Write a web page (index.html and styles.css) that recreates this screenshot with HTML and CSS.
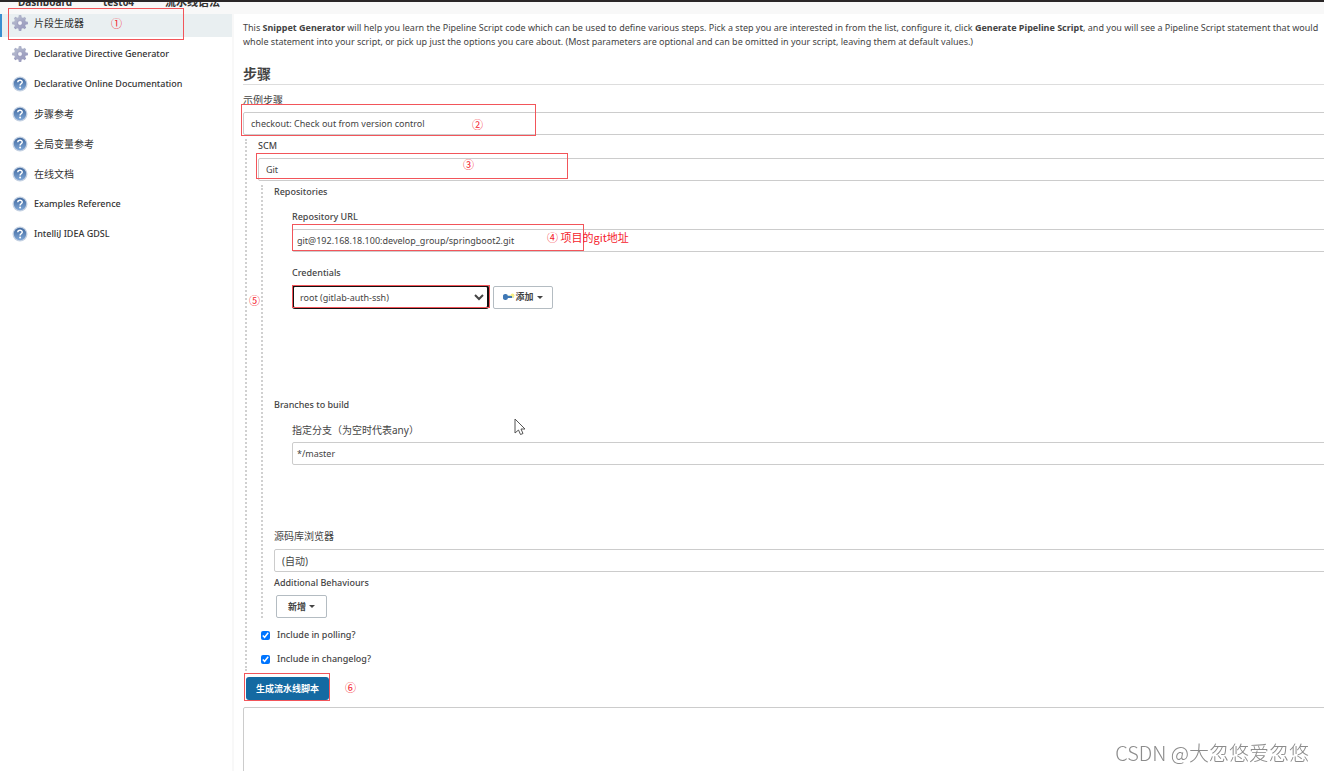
FILE: index.html
```html
<!DOCTYPE html>
<html lang="zh-CN">
  <head>
    <meta charset="UTF-8" />
    <meta name="viewport" content="width=device-width, initial-scale=1.0" />
    <title>流水线语法</title>
    <link rel="stylesheet" href="styles.css">
  </head>
  <body>
    <!-- Shared icons -->
    <svg class="defs" width="0" height="0">
      <defs>
        <linearGradient id="gearFill" x1="0" y1="0" x2="1" y2="1">
          <stop offset="0" stop-color="#b9bfd0" />
          <stop offset="1" stop-color="#9595bb" />
        </linearGradient>
        <linearGradient id="helpFill" x1="0" y1="0" x2="0" y2="1">
          <stop offset="0" stop-color="#41699f" />
          <stop offset="1" stop-color="#7ea6d6" />
        </linearGradient>
        <symbol id="gear" viewBox="0 0 16 16">
          <g fill="url(#gearFill)">
            <rect x="6.5" y="0" width="3" height="16" rx="1" />
            <rect x="0" y="6.5" width="16" height="3" rx="1" />
            <rect x="6.5" y="0.3" width="3" height="15.4" rx="1" transform="rotate(45 8 8)" />
            <rect x="6.5" y="0.3" width="3" height="15.4" rx="1" transform="rotate(-45 8 8)" />
            <circle cx="8" cy="8" r="6" />
          </g>
          <circle cx="8" cy="8" r="2.4" fill="#f4f5fa" stroke="#8583ad" stroke-width="0.6" />
        </symbol>
        <symbol id="help" viewBox="0 0 16 16">
          <circle cx="8" cy="8" r="7.5" fill="#c4d1e2" />
          <circle cx="8" cy="8" r="6.2" fill="url(#helpFill)" />
          <path d="M5.8 6.3C5.8 3.5 10.4 3.6 10.2 6.2C10.1 7.7 8.1 7.8 8.1 9.4" fill="none" stroke="#fff" stroke-width="1.5" />
          <circle cx="8.1" cy="11.6" r="1" fill="#fff" />
        </symbol>
      </defs>
    </svg>

    <header class="topbar">
      <nav class="breadcrumbs">
        <a href="#">Dashboard</a>
        <a href="#">test04</a>
        <a class="current" href="#">流水线语法</a>
      </nav>
    </header>

    <div class="page">
      <nav class="sidebar">
        <a class="task zh active" href="#"><svg><use href="#gear" /></svg>片段生成器</a>
        <a class="task" href="#"><svg><use href="#gear" /></svg>Declarative Directive Generator</a>
        <a class="task" href="#"><svg><use href="#help" /></svg>Declarative Online Documentation</a>
        <a class="task zh" href="#"><svg><use href="#help" /></svg>步骤参考</a>
        <a class="task zh" href="#"><svg><use href="#help" /></svg>全局变量参考</a>
        <a class="task zh" href="#"><svg><use href="#help" /></svg>在线文档</a>
        <a class="task" href="#"><svg><use href="#help" /></svg>Examples Reference</a>
        <a class="task" href="#"><svg><use href="#help" /></svg>IntelliJ IDEA GDSL</a>
        <div class="frame frame-task"></div>
        <span class="note note-1">①</span>
      </nav>

      <main class="main">
        <p class="intro">
          This <b>Snippet Generator</b> will help you learn the Pipeline Script code which can be used to define various steps. Pick a step you are interested in from the list, configure it, click <b>Generate Pipeline Script</b>, and you will see a Pipeline Script statement that would<br>
          whole statement into your script, or pick up just the options you care about. (Most parameters are optional and can be omitted in your script, leaving them at default values.)
        </p>

        <form class="form">
          <h2>步骤</h2>
          <label class="zh" for="step">示例步骤</label>
          <div class="field">
            <select id="step" class="wide"><option>checkout: Check out from version control</option></select>
            <div class="frame frame-step"></div>
            <span class="note note-2">②</span>
          </div>

          <div class="group group-step">
            <label for="scm">SCM</label>
            <div class="field">
              <select id="scm" class="wide"><option>Git</option></select>
              <div class="frame frame-scm"></div>
              <span class="note note-3">③</span>
            </div>

            <div class="group group-scm">
              <div class="label">Repositories</div>
              <div class="nested repositories">
                <label for="url">Repository URL</label>
                <div class="field">
                  <input id="url" class="wide" type="text" value="git@192.168.18.100:develop_group/springboot2.git" />
                  <div class="frame frame-url"></div>
                  <span class="note note-4">④ 项目的git地址</span>
                </div>
                <label class="credentials-label" for="credentials">Credentials</label>
                <div class="field credentials">
                  <select id="credentials"><option>root (gitlab-auth-ssh)</option></select>
                  <button type="button" class="menu-button add">
                    <svg class="key" viewBox="0 0 12 8">
                      <path d="M5 3.5h6" stroke="#a8c8a0" stroke-width="2" />
                      <circle cx="9.5" cy="2.5" r="2" fill="#f5ee86" />
                      <path d="M0 4a2.5 2.5 0 0 1 5-1h4v2H5A2.5 2.5 0 0 1 0 4z" fill="#3f78b5" />
                    </svg>添加<span class="caret"></span>
                  </button>
                  <div class="frame frame-credentials"></div>
                  <span class="note note-5">⑤</span>
                </div>
              </div>

              <div class="label">Branches to build</div>
              <div class="nested branches">
                <label class="zh" for="branch">指定分支（为空时代表any）</label>
                <div class="field">
                  <input id="branch" class="wide" type="text" value="*/master" />
                  <svg class="pointer" viewBox="0 0 12 18">
                    <path d="M1 1v14l3.5-3 2 4.5 2.5-1-2-4.5H11z" fill="#fff" stroke="#555" />
                  </svg>
                </div>
              </div>

              <label class="zh" for="browser">源码库浏览器</label>
              <select id="browser" class="wide zh"><option>(自动)</option></select>
              <div class="label behaviours-label">Additional Behaviours</div>
              <button type="button" class="menu-button new">新增<span class="caret"></span></button>
            </div>

            <label class="check"><input type="checkbox" checked />Include in polling?</label>
            <label class="check"><input type="checkbox" checked />Include in changelog?</label>
          </div>

          <div class="field actions">
            <button type="button" class="primary">生成流水线脚本</button>
            <div class="frame frame-generate"></div>
            <span class="note note-6">⑥</span>
          </div>
          <textarea class="output" aria-label="Pipeline Script"></textarea>
        </form>
      </main>
    </div>

    <div class="watermark">CSDN @大忽悠爱忽悠</div>
  </body>
</html>
```
FILE: styles.css
```css
* {
  box-sizing: border-box;
}
body {
  display: flex;
  flex-direction: column;
  height: 100vh;
  margin: 0;
  overflow: hidden;
  background: #fff;
  color: #444;
  font: 9px/14px "Noto Sans", "Noto Sans CJK SC", sans-serif;
}
.defs {
  position: absolute;
}
a {
  color: #333;
  text-decoration: none;
}

/* Header */
.topbar {
  flex: none;
  height: 14px;
  border-top: 2px solid #2a2627;
  background: #f8f8f8;
  overflow: hidden;
}
.breadcrumbs {
  display: flex;
  gap: 31px;
  margin-top: -7px;
  padding-left: 18px;
  font-size: 10px;
  font-weight: bold;
}
.breadcrumbs .current {
  font-size: 11px;
}
.page {
  display: flex;
  flex: 1;
  min-height: 0;
}

/* Sidebar */
.sidebar {
  position: relative;
  flex: none;
  width: 234px;
  border-right: 2px solid #f8f8f8;
}
.task {
  display: flex;
  align-items: center;
  gap: 6px;
  height: 30px;
  padding-left: 12px;
  font-weight: 500;
}
.task svg {
  width: 16px;
  height: 16px;
}
.task.active {
  height: 23px;
  margin-bottom: 2px;
  padding: 0 0 6px 10px;
  border-left: 2px solid #3b8ed0;
  background: #e9eff1;
}

/* Form */
.main {
  flex: 1;
  min-width: 0;
  padding: 7px 0 0 9px;
  overflow: hidden;
}
.intro {
  margin: 0;
  white-space: nowrap;
}
.form {
  margin-right: -20px;
}
h2 {
  margin: 14px 0 8px;
  border-bottom: 1px solid #ddd;
  font-size: 14px;
  line-height: 21px;
}
label,
.label {
  display: block;
  font-weight: 500;
}
.field {
  position: relative;
}
select,
input,
button,
textarea {
  margin: 0;
  color: #444;
  font: inherit;
}
.zh {
  font-size: 10px;
  font-weight: normal;
}
.wide {
  display: block;
  width: 100%;
  height: 23px;
  border: 1px solid #ccc;
  border-radius: 2px;
  background: #fff;
  appearance: none;
}
select.wide {
  padding: 0 7px;
}
input.wide {
  padding: 0 4px;
}
h2 + label {
  margin-bottom: 5px;
}
.group {
  border-left: 2px dotted #d0d0d0;
}
.group-step {
  margin: 4px 0 0 2px;
  padding-left: 11px;
}
.group-step > label:first-child {
  margin-bottom: 5px;
}
.group-scm {
  margin: 4px 0 5px 3px;
  padding-left: 11px;
}
.nested {
  margin: 11px 0 0 18px;
}
.nested > label {
  margin-bottom: 5px;
}
.repositories {
  margin-bottom: 89px;
}
.branches {
  margin-bottom: 64px;
}
.group-scm > label {
  margin-bottom: 6px;
}
.credentials-label {
  margin-top: 14px;
}
.credentials {
  display: flex;
  align-items: center;
  gap: 4px;
}
#credentials {
  width: 197px;
  height: 24px;
  padding: 0 2px;
  border: 2px solid #111;
  border-radius: 3px;
  background: #fff;
}
.menu-button {
  display: flex;
  align-items: center;
  justify-content: center;
  height: 23px;
  padding: 0;
  border: 1px solid #b4bcc2;
  border-radius: 2px;
  background: #fff;
  font-weight: bold;
}
.add {
  width: 60px;
}
.new {
  width: 51px;
  margin-left: 2px;
}
.key {
  width: 12px;
  height: 8px;
}
.caret {
  margin-left: 3px;
  border: 3px solid transparent;
  border-top-color: #444;
  border-bottom: 0;
}
.behaviours-label {
  margin: 4px 0 5px;
}
.check {
  display: flex;
  align-items: center;
  gap: 7px;
  height: 24px;
  padding-left: 3px;
}
.check + .check {
  margin-bottom: -5px;
}
.check input {
  width: 9px;
  height: 9px;
}
.actions {
  margin: 11px 0 7px 3px;
}
.primary {
  display: block;
  width: 83px;
  height: 23px;
  padding: 0;
  border: 0;
  border-radius: 3px;
  background: #146aa2;
  color: #fff;
  font-weight: bold;
}
.output {
  display: block;
  width: 100%;
  height: 120px;
  border: 1px solid #ccc;
  border-radius: 2px;
  resize: none;
}

/* Red annotations over the form */
.frame,
.note {
  position: absolute;
  pointer-events: none;
}
.frame {
  border: 1px solid #f2555a;
}
.note {
  color: #f5222d;
  font-family: "Noto Sans CJK SC", sans-serif;
  font-size: 11px;
  white-space: nowrap;
}
.frame-task {
  top: -6px;
  left: 8px;
  width: 176px;
  height: 32px;
}
.frame-step {
  top: -8px;
  left: -2px;
  width: 295px;
  height: 32px;
}
.frame-scm {
  top: -5px;
  left: -2px;
  width: 312px;
  height: 26px;
}
.frame-url {
  top: -5px;
  left: 0;
  width: 292px;
  height: 27px;
}
.frame-credentials {
  top: 0;
  left: 0;
  width: 198px;
  height: 23px;
}
.frame-generate {
  top: -4px;
  left: -2px;
  width: 86px;
  height: 28px;
}
.note-1 {
  top: 2px;
  left: 111px;
}
.note-2 {
  top: 5px;
  left: 229px;
}
.note-3 {
  top: -1px;
  left: 205px;
}
.note-4 {
  top: 1px;
  left: 255px;
}
.note-5 {
  top: 8px;
  left: -43px;
}
.note-6 {
  top: 3px;
  left: 99px;
}
.pointer {
  position: absolute;
  top: -24px;
  left: 222px;
  width: 12px;
  height: 18px;
}
.watermark {
  position: fixed;
  right: 15px;
  bottom: 4px;
  color: #8c8c8c;
  font: 300 20px/28px "Noto Sans CJK SC", sans-serif;
}
```
